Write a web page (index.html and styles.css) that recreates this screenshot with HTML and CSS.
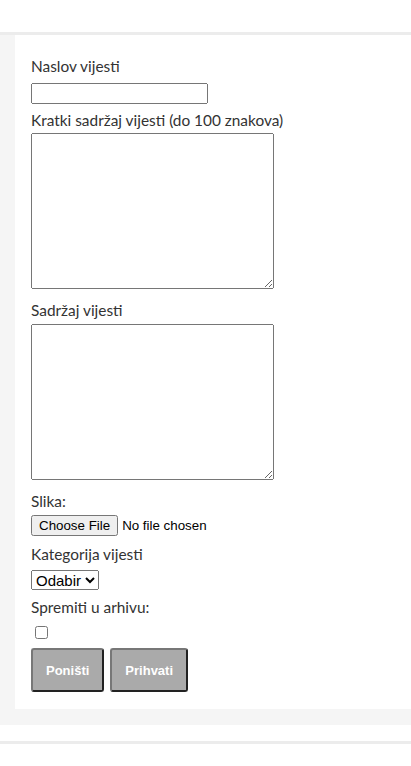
FILE: index.html
```html
<!DOCTYPE html>
<html lang="hr">
<head>
<meta charset="utf-8">
<title>Unos vijesti</title>
<link rel="stylesheet" href="styles.css">
</head>
<body>
<header class="top"></header>
<section class="wrap">
  <form class="card">
    <label class="lbl lbl-first" for="naslov">Naslov vijesti</label>
    <input class="text-in" type="text" id="naslov">
    <label class="lbl lbl-tight" for="kratki">Kratki sadržaj vijesti (do 100 znakova)</label>
    <textarea class="area" id="kratki"></textarea>
    <label class="lbl lbl-after-area" for="sadrzaj">Sadržaj vijesti</label>
    <textarea class="area" id="sadrzaj"></textarea>
    <label class="lbl lbl-after-area" for="slika">Slika:</label>
    <input class="file-in" type="file" id="slika">
    <label class="lbl lbl-kat" for="kat">Kategorija vijesti</label>
    <select class="sel" id="kat"><option>Odabir</option></select>
    <label class="lbl lbl-arh" for="arhiva">Spremiti u arhivu:</label>
    <input class="chk" type="checkbox" id="arhiva">
    <div class="btns">
      <button class="btn" type="reset">Poništi</button>
      <button class="btn" type="submit">Prihvati</button>
    </div>
  </form>
</section>
<footer class="foot"></footer>
</body>
</html>
```

FILE: styles.css
```css
html, body {
  margin: 0;
  padding: 0;
  background: #fff;
}
.top {
  height: 32px;
  background: #fff;
}
.wrap {
  border-top: 3px solid #ececec;
  background: #f5f5f5;
  padding: 0 0 16px 15px;
}
.card {
  background: #fff;
  padding: 19px 16px 17px 16px;
  display: flex;
  flex-direction: column;
  align-items: flex-start;
}
.lbl {
  display: block;
  font-family: Lato, "Noto Sans", sans-serif;
  font-size: 15.4px;
  line-height: 24px;
  color: #333;
  margin: 4px 0 2px 0;
}
.lbl-first { margin: 0 0 5px 0; }
.lbl-tight { margin: 4px 0 1px 0; }
.lbl-kat { margin: 6px 0 4px 0; }
.lbl-arh { margin: 5px 0 1px 0; }
.lbl-after-area { margin: 9px 0 2px 0; }
.text-in {
  box-sizing: border-box;
  width: 177px;
  height: 21px;
  margin: 0;
}
.area {
  box-sizing: border-box;
  width: 243px;
  height: 156px;
  margin: 0;
}
.file-in {
  margin: 0;
  font-family: "Liberation Sans", Arial, sans-serif;
  font-size: 13.333px;
}
.sel {
  margin: 0;
  height: 20px;
  font-family: "Liberation Sans", Arial, sans-serif;
  font-size: 15px;
}
.chk {
  margin: 6px 3px 3px 4px;
  width: 13px;
  height: 13px;
}
.btns {
  display: flex;
  gap: 6px;
  margin-top: 6px;
}
.btn {
  box-sizing: border-box;
  height: 44px;
  padding: 0 13px;
  background: #aaa;
  color: #fff;
  font-family: "Liberation Sans", Arial, sans-serif;
  font-weight: bold;
  font-size: 13px;
  border: 2px solid;
  border-color: #777 #222 #222 #777;
  border-radius: 3px;
}
.foot {
  margin-top: 16px;
  border-top: 3px solid #ececec;
  height: 40px;
}
```
